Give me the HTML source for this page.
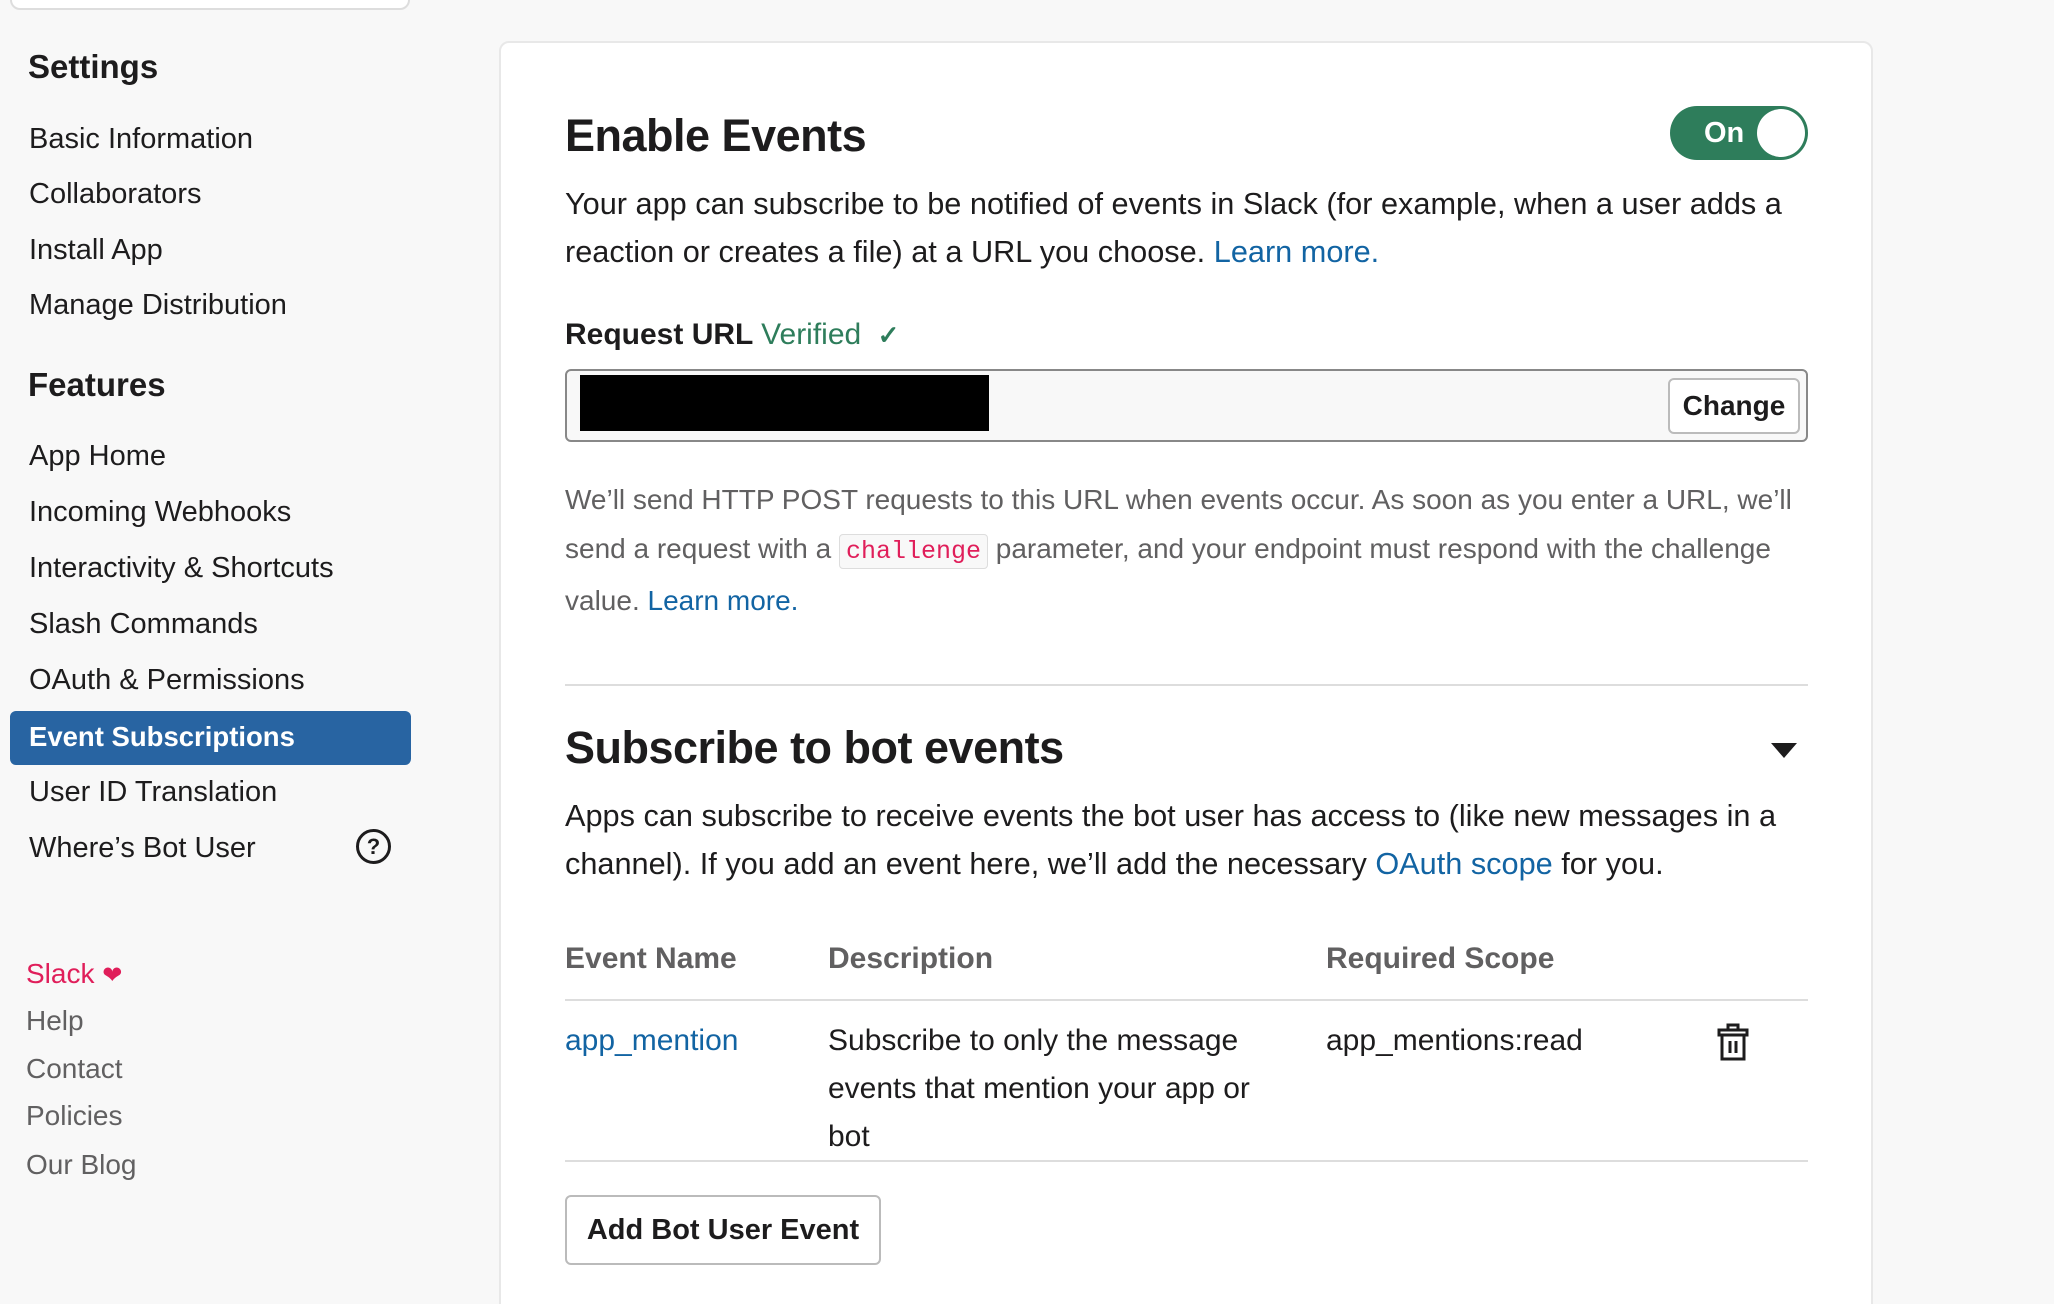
<!DOCTYPE html>
<html><head><meta charset="utf-8"><style>
*{margin:0;padding:0;box-sizing:border-box}
html,body{width:2054px;height:1304px;overflow:hidden}
body{background:#f8f8f8;font-family:"Liberation Sans",sans-serif;color:#1d1c1d}
#w{position:relative;width:2054px;height:1304px;overflow:hidden}
.a{position:absolute;white-space:nowrap}
.nav{left:29px;font-size:29px;line-height:36px;color:#1d1c1d}
.h{left:28px;font-size:33px;font-weight:bold}
.ft{left:26px;font-size:28px;color:#616061}
.card{position:absolute;left:499px;top:41px;width:1374px;height:1280px;background:#fff;border:2px solid #e8e8e8;border-radius:10px}
.p{font-size:30.7px;line-height:48px}
a{color:#1264a3;text-decoration:none}
.g{font-size:28px;line-height:49px;color:#616061}
code{font-family:"Liberation Mono",monospace;color:#e01e5a;background:#f8f8f8;border:1px solid #ddd;border-radius:4px;padding:2px 6px;font-size:25px}
.th{font-size:30px;font-weight:bold;color:#616061}
.td{font-size:30px;line-height:48px}
</style></head><body><div id="w">
<div class="a" style="left:10px;top:-20px;width:400px;height:30px;background:#fff;border:2px solid #ddd;border-radius:10px"></div>
<div class="a h" style="top:48px">Settings</div>
<div class="a nav" style="top:121px">Basic Information</div>
<div class="a nav" style="top:176px">Collaborators</div>
<div class="a nav" style="top:232px">Install App</div>
<div class="a nav" style="top:287px">Manage Distribution</div>
<div class="a h" style="top:366px">Features</div>
<div class="a nav" style="top:438px">App Home</div>
<div class="a nav" style="top:494px">Incoming Webhooks</div>
<div class="a nav" style="top:550px">Interactivity &amp; Shortcuts</div>
<div class="a nav" style="top:606px">Slash Commands</div>
<div class="a nav" style="top:662px">OAuth &amp; Permissions</div>
<div class="a" style="left:10px;top:711px;width:401px;height:54px;background:#2864a2;border-radius:6px"></div>
<div class="a nav" style="top:719px;color:#fff;font-weight:bold;font-size:27.5px">Event Subscriptions</div>
<div class="a nav" style="top:774px">User ID Translation</div>
<div class="a nav" style="top:830px">Where’s Bot User</div>
<div class="a" style="left:356px;top:829px;width:35px;height:35px;border:3px solid #1d1c1d;border-radius:50%;text-align:center;font-size:22px;font-weight:bold;line-height:29px">?</div>
<div class="a ft" style="top:958px;color:#e01e5a">Slack <span style="font-size:24px">❤</span></div>
<div class="a ft" style="top:1005px">Help</div>
<div class="a ft" style="top:1053px">Contact</div>
<div class="a ft" style="top:1100px">Policies</div>
<div class="a ft" style="top:1149px">Our Blog</div>

<div class="card"></div>
<div class="a" style="left:565px;top:110px;font-size:45px;font-weight:bold;letter-spacing:-0.5px">Enable Events</div>
<div class="a" style="left:1670px;top:106px;width:138px;height:54px;background:#2e7d5b;border-radius:27px;color:#fff;font-size:29px;font-weight:bold;line-height:54px;padding-left:34px">On<div style="position:absolute;right:3px;top:3px;width:48px;height:48px;border-radius:50%;background:#fff"></div></div>
<div class="a p" style="left:565px;top:180px">Your app can subscribe to be notified of events in Slack (for example, when a user adds a<br>reaction or creates a file) at a URL you choose. <a>Learn more.</a></div>
<div class="a" style="left:565px;top:318px;font-size:30px;font-weight:bold">Request URL <span style="color:#2e7d5b;font-weight:normal">Verified</span> <span style="color:#2e7d5b;font-size:26px;margin-left:8px">✓</span></div>
<div class="a" style="left:565px;top:369px;width:1243px;height:73px;background:#f8f8f8;border:2px solid #888;border-radius:6px"></div>
<div class="a" style="left:580px;top:375px;width:409px;height:56px;background:#000"></div>
<div class="a" style="left:1668px;top:378px;width:132px;height:56px;background:#fff;border:2px solid #bbb;border-radius:6px;font-size:28px;font-weight:bold;text-align:center;line-height:52px">Change</div>
<div class="a g" style="left:565px;top:475px">We’ll send HTTP POST requests to this URL when events occur. As soon as you enter a URL, we’ll<br>send a request with a <code>challenge</code> parameter, and your endpoint must respond with the challenge<br>value. <a>Learn more.</a></div>
<div class="a" style="left:565px;top:684px;width:1243px;height:2px;background:#ddd"></div>
<div class="a" style="left:565px;top:722px;font-size:45px;font-weight:bold;letter-spacing:-0.5px">Subscribe to bot events</div>
<div class="a" style="left:1771px;top:743px;width:0;height:0;border-left:13px solid transparent;border-right:13px solid transparent;border-top:15px solid #1d1c1d"></div>
<div class="a p" style="left:565px;top:792px">Apps can subscribe to receive events the bot user has access to (like new messages in a<br>channel). If you add an event here, we’ll add the necessary <a>OAuth scope</a> for you.</div>
<div class="a th" style="left:565px;top:942px">Event Name</div>
<div class="a th" style="left:828px;top:942px">Description</div>
<div class="a th" style="left:1326px;top:942px">Required Scope</div>
<div class="a" style="left:565px;top:999px;width:1243px;height:2px;background:#ddd"></div>
<div class="a td" style="left:565px;top:1017px"><a>app_mention</a></div>
<div class="a td" style="left:828px;top:1017px">Subscribe to only the message<br>events that mention your app or<br>bot</div>
<div class="a td" style="left:1326px;top:1017px">app_mentions:read</div>
<svg class="a" style="left:1716px;top:1022px" width="34" height="40" viewBox="0 0 34 40" fill="none" stroke="#1d1c1d" stroke-width="3"><path d="M12 7V3h10v4M3 8h28v5H3zM6 13v24h22V13M14 19v12M20 19v12"/></svg>
<div class="a" style="left:565px;top:1160px;width:1243px;height:2px;background:#ddd"></div>
<div class="a" style="left:565px;top:1195px;width:316px;height:70px;background:#fff;border:2px solid #bbb;border-radius:6px;font-size:29px;font-weight:bold;text-align:center;line-height:66px">Add Bot User Event</div>
</div></body></html>
